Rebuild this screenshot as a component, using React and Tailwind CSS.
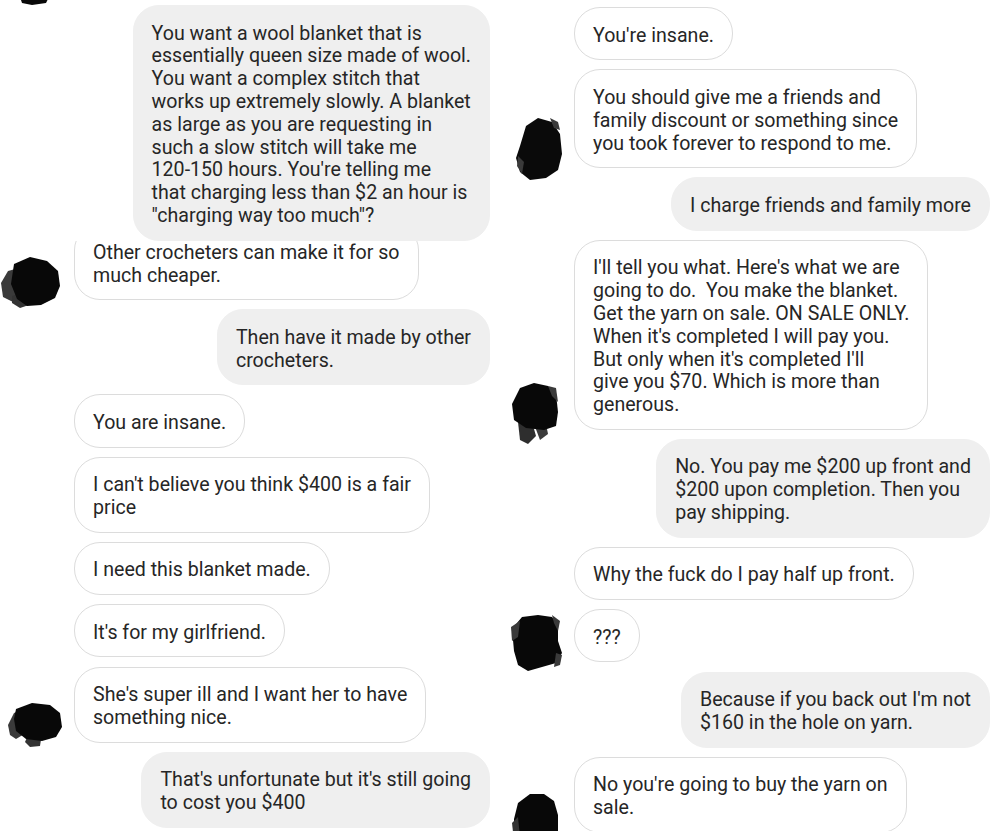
import React from 'react'

const base =
    "w-fit rounded-[26px] border px-[18px] pt-[16.6px] pb-[11.8px] text-[19.6px] leading-[22.8px] text-[#262626] whitespace-pre"

function Lines({ lines }) {
    return lines.map((l, i) => (
        <React.Fragment key={i}>
            {i > 0 && <br />}
            {l}
        </React.Fragment>
    ))
}

// scribbled-out avatar blobs
function Blob({ variant, className }) {
    if (variant === 'a') {
        return (
            <svg width="60" height="52" viewBox="0 0 60 52" className={className}>
                <path d="M1 27 L8 15 L19 12 L22 32 L13 46 L3 41 Z" fill="#3a3a3a" />
                <path d="M12 40 L24 36 L32 48 L20 52 L12 47 Z" fill="#333" />
                <path d="M14 8 L30 1 L47 5 L58 15 L60 30 L55 42 L41 49 L27 50 L17 43 L11 28 Z" fill="#080808" />
            </svg>
        )
    }
    if (variant === 'b') {
        return (
            <svg width="54" height="44" viewBox="0 0 54 44" className={className}>
                <path d="M0 22 L6 10 L16 6 L18 30 L8 36 L2 32 Z" fill="#3a3a3a" />
                <path d="M20 32 L34 30 L32 43 L22 44 L17 39 Z" fill="#333" />
                <path d="M8 6 L24 0 L42 2 L52 10 L54 24 L48 34 L34 38 L18 36 L8 28 L6 16 Z" fill="#080808" />
            </svg>
        )
    }
    if (variant === 'c') {
        return (
            <svg width="46" height="64" viewBox="0 0 46 64" className={className}>
                <path d="M4 30 L10 10 L22 2 L36 6 L44 18 L46 38 L42 54 L30 62 L14 64 L4 56 L0 42 Z" fill="#0a0a0a" />
                <path d="M34 2 L42 6 L44 14 L38 12 Z" fill="#3a3a3a" />
                <path d="M2 40 L8 46 L6 58 L1 50 Z" fill="#3a3a3a" />
            </svg>
        )
    }
    if (variant === 'd') {
        return (
            <svg width="50" height="63" viewBox="0 0 50 63" className={className}>
                <path d="M8 40 L22 40 L26 54 L18 62 L10 58 Z" fill="#2e2e2e" />
                <path d="M24 42 L36 42 L38 52 L30 58 Z" fill="#3b3b3b" />
                <path d="M2 22 L10 6 L24 1 L38 4 L46 12 L48 30 L46 44 L34 48 L16 46 L4 38 Z" fill="#080808" />
                <path d="M38 4 L46 6 L48 20 L42 14 Z" fill="#3a3a3a" />
            </svg>
        )
    }
    if (variant === 'e') {
        return (
            <svg width="52" height="56" viewBox="0 0 52 56" className={className}>
                <path d="M2 14 L12 2 L28 0 L42 2 L48 10 L48 26 L52 38 L46 48 L32 52 L18 56 L8 50 L4 36 Z" fill="#080808" />
                <path d="M1 12 L10 6 L8 22 L2 26 Z" fill="#3a3a3a" />
                <path d="M42 0 L50 6 L48 16 L44 8 Z" fill="#3a3a3a" />
                <path d="M46 38 L52 40 L50 50 L44 52 Z" fill="#3a3a3a" />
            </svg>
        )
    }
    if (variant === 'f') {
        return (
            <svg width="48" height="60" viewBox="0 0 48 60" className={className}>
                <path d="M2 26 L6 10 L18 1 L32 1 L42 8 L46 22 L46 44 L38 58 L20 60 L6 54 L2 40 Z" fill="#080808" />
                <path d="M0 30 L6 24 L8 44 L2 48 Z" fill="#333" />
            </svg>
        )
    }
    return null
}

function Recv({ lines, blob, blobClass, className = "" }) {
    return (
        <div className={`flex items-end ${className}`}>
            <div className="flex w-[74px] shrink-0 items-end">
                {blob && <Blob variant={blob} className={blobClass} />}
            </div>
            <div className={`${base} border-[#dcdcdc] bg-white`}>
                <Lines lines={lines} />
            </div>
        </div>
    )
}

function Sent({ lines, className = "" }) {
    return (
        <div className={`flex justify-end ${className}`}>
            <div className={`${base} border-[#efefef] bg-[#efefef]`}>
                <Lines lines={lines} />
            </div>
        </div>
    )
}

export default function App() {
    return (
        <div
            className="flex h-[831px] w-[1000px] overflow-hidden bg-white"
            style={{ fontFamily: 'Roboto, "Noto Sans", sans-serif' }}
        >
            {/* left column */}
            <div className="flex w-[500px] shrink-0 flex-col pr-[10px]">
                <div className="h-[5px] overflow-hidden pl-[20px]">
                    <svg width="30" height="20" viewBox="0 0 30 20" className="-mt-[15px]">
                        <path d="M0 12 L10 4 L24 2 L30 10 L26 18 L12 20 L2 18 Z" fill="#080808" />
                    </svg>
                </div>
                <Sent
                    lines={[
                        "You want a wool blanket that is",
                        "essentially queen size made of wool.",
                        "You want a complex stitch that",
                        "works up extremely slowly. A blanket",
                        "as large as you are requesting in",
                        "such a slow stitch will take me",
                        "120-150 hours. You're telling me",
                        "that charging less than $2 an hour is",
                        "\"charging way too much\"?",
                    ]}
                />
                <div className="flex items-end">
                    <div className="flex w-[74px] shrink-0 items-end">
                        <Blob variant="a" className="-mb-[8px]" />
                    </div>
                    <div className="h-[59.4px] overflow-hidden">
                        <div className={`${base} -mt-[16.4px] border-[#dcdcdc] bg-white`}>
                            <Lines lines={["Other crocheters can make it for so", "much cheaper."]} />
                        </div>
                    </div>
                </div>
                <Sent className="mt-[9.2px]" lines={["Then have it made by other", "crocheters."]} />
                <Recv className="mt-[9.2px]" lines={["You are insane."]} />
                <Recv className="mt-[9.2px]" lines={["I can't believe you think $400 is a fair", "price"]} />
                <Recv className="mt-[9.2px]" lines={["I need this blanket made."]} />
                <Recv className="mt-[9.2px]" lines={["It's for my girlfriend."]} />
                <Recv
                    className="mt-[9.2px]"
                    lines={["She's super ill and I want her to have", "something nice."]}
                    blob="b"
                    blobClass="-mb-[4px] ml-[8px]"
                />
                <Sent className="mt-[9.2px]" lines={["That's unfortunate but it's still going", "to cost you $400"]} />
            </div>

            {/* right column */}
            <div className="flex w-[500px] shrink-0 flex-col pt-[7px] pr-[10px]">
                <Recv lines={["You're insane."]} />
                <Recv
                    className="mt-[9.2px]"
                    lines={[
                        "You should give me a friends and",
                        "family discount or something since",
                        "you took forever to respond to me.",
                    ]}
                    blob="c"
                    blobClass="-mb-[12px] ml-[16px]"
                />
                <Sent className="mt-[9.2px]" lines={["I charge friends and family more"]} />
                <Recv
                    className="mt-[9.2px]"
                    lines={[
                        "I'll tell you what. Here's what we are",
                        "going to do.  You make the blanket.",
                        "Get the yarn on sale. ON SALE ONLY.",
                        "When it's completed I will pay you.",
                        "But only when it's completed I'll",
                        "give you $70. Which is more than",
                        "generous.",
                    ]}
                    blob="d"
                    blobClass="-mb-[15px] ml-[10px]"
                />
                <Sent
                    className="mt-[9.2px]"
                    lines={["No. You pay me $200 up front and", "$200 upon completion. Then you", "pay shipping."]}
                />
                <Recv className="mt-[9.2px]" lines={["Why the fuck do I pay half up front."]} />
                <Recv className="mt-[9.2px]" lines={["???"]} blob="e" blobClass="-mb-[9px] ml-[10px]" />
                <Sent className="mt-[9.2px]" lines={["Because if you back out I'm not", "$160 in the hole on yarn."]} />
                <Recv
                    className="mt-[9.2px]"
                    lines={["No you're going to buy the yarn on", "sale."]}
                    blob="f"
                    blobClass="-mb-[20px] ml-[12px]"
                />
            </div>
        </div>
    )
}
